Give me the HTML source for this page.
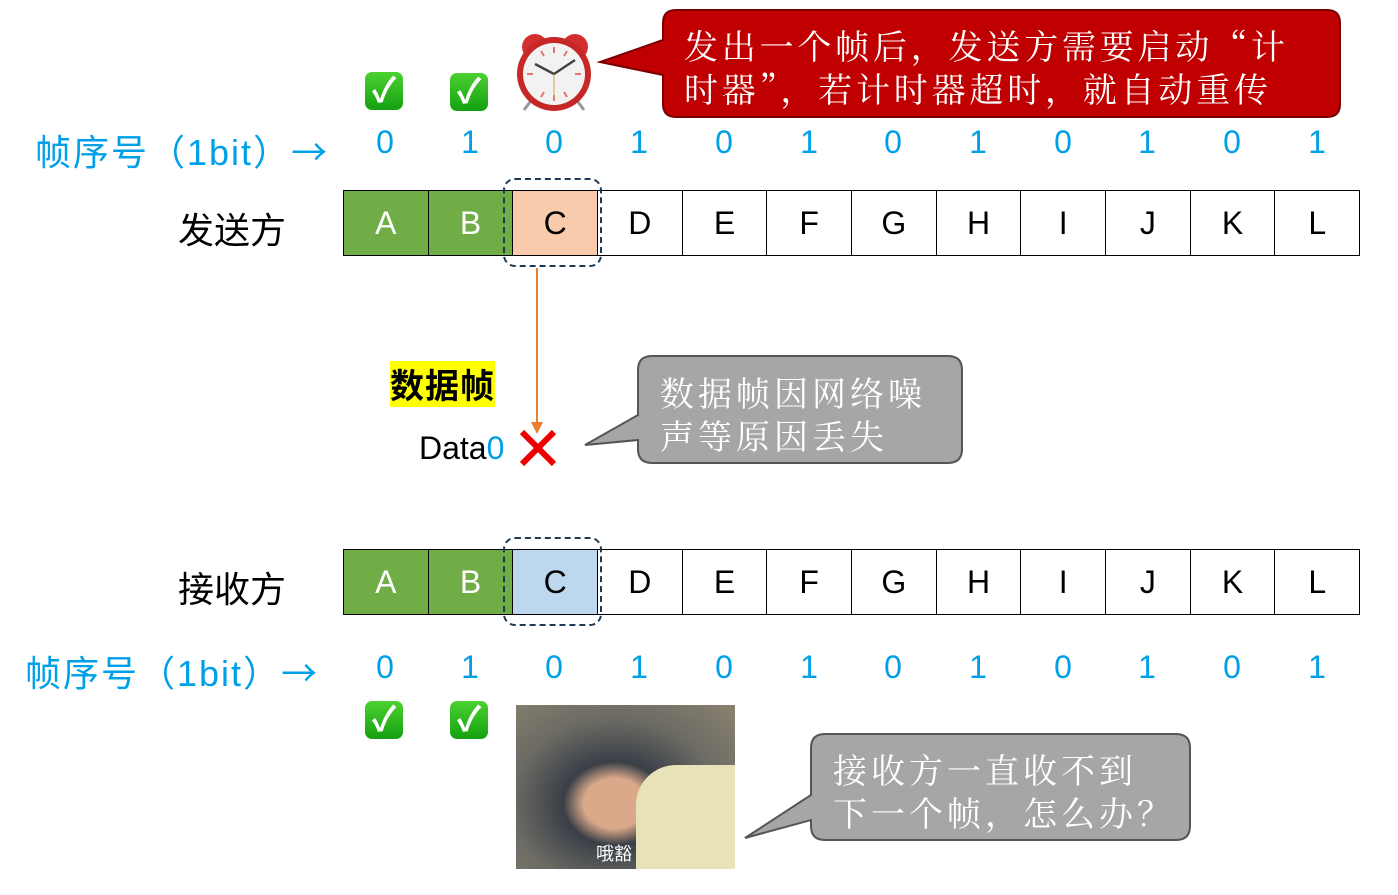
<!DOCTYPE html><html><head><meta charset="utf-8"><style>
body{margin:0;width:1398px;height:895px;position:relative;background:#fff;overflow:hidden;font-family:"Liberation Sans","Noto Sans CJK SC",sans-serif}
.a{position:absolute}
.n{position:absolute;color:#00a0e9;font-size:32px;width:60px;text-align:center;font-family:"Liberation Sans",sans-serif}
.row{position:absolute;left:343px;width:1017px;height:66px;display:flex;border:1.5px solid #000;box-sizing:border-box}
.row div{flex:1;border-right:1.5px solid #000;display:flex;align-items:center;justify-content:center;font-size:32px;color:#000}
.row div:last-child{border-right:none}
.g{background:#70ad47;color:#fff!important}
.chk{position:absolute;width:38px;height:38px;border-radius:7px;background:linear-gradient(#4cd131,#14a010);color:#fff;font-size:34px;line-height:38px;text-align:center;font-weight:bold}
.lbl{position:absolute;font-size:36px;font-family:"Noto Sans CJK SC",sans-serif}
.ct{position:absolute;font-size:34px;line-height:43px;font-family:"Noto Serif CJK SC","Noto Sans CJK SC",serif}
.dash{position:absolute;width:99px;height:89px;border:2.5px dashed #1f3a55;border-radius:12px;box-sizing:border-box}
</style></head><body>
<svg class="a" style="left:0;top:0" width="1398" height="895">
<path d="M676 10 H1327 Q1340 10 1340 23 V104 Q1340 117 1327 117 H676 Q663 117 663 104 V75 L600 62 L663 40 V23 Q663 10 676 10Z" fill="#c00000" stroke="#7a0000" stroke-width="2"/>
<path d="M652 356 H948 Q962 356 962 370 V449 Q962 463 948 463 H652 Q638 463 638 449 V440 L585 445 L638 415 V370 Q638 356 652 356Z" fill="#a6a6a6" stroke="#555" stroke-width="2"/>
<path d="M825 734 H1176 Q1190 734 1190 748 V826 Q1190 840 1176 840 H825 Q811 840 811 826 V820 L745 838 L811 795 V748 Q811 734 825 734Z" fill="#a6a6a6" stroke="#555" stroke-width="2"/>
<line x1="537" y1="268" x2="537" y2="425" stroke="#ed7d31" stroke-width="2"/>
<path d="M531 422 L537 434 L543 422Z" fill="#ed7d31"/>
<path d="M522 432 L554 464 M554 432 L522 464" stroke="#e00" stroke-width="6"/>
<circle cx="535" cy="47" r="13" fill="#d32f2f"/><circle cx="575" cy="47" r="13" fill="#d32f2f"/>
<path d="M533 98 L524 110 M575 98 L584 110" stroke="#999" stroke-width="3"/>
<circle cx="554" cy="74" r="37" fill="#c62828"/><circle cx="554" cy="74" r="31" fill="#f2f2f2"/>
<g stroke="#e57373" stroke-width="2"><path d="M554 47v6M554 95v6M527 74h6M575 74h6M541 51l3 5M567 51l-3 5M541 97l3-5M567 97l-3-5"/></g>
<path d="M554 74 L535 64 M554 74 L575 60" stroke="#444" stroke-width="2.5"/>
<line x1="554" y1="74" x2="554" y2="98" stroke="#d4a04a" stroke-width="1"/>
</svg>
<div class="lbl" style="left:35px;top:124px;color:#00a0e9;letter-spacing:2px">帧序号（<span style="font-family:'Liberation Sans'">1bit</span>）→</div>
<div class="lbl" style="left:25px;top:645px;color:#00a0e9;letter-spacing:2px">帧序号（<span style="font-family:'Liberation Sans'">1bit</span>）→</div>
<div class="lbl" style="left:178px;top:202px">发送方</div>
<div class="lbl" style="left:178px;top:561px">接收方</div>
<div class="row" style="top:190px"><div class="g">A</div><div class="g">B</div><div style="background:#f8cbad">C</div><div>D</div><div>E</div><div>F</div><div>G</div><div>H</div><div>I</div><div>J</div><div>K</div><div>L</div></div>
<div class="row" style="top:549px"><div class="g">A</div><div class="g">B</div><div style="background:#bdd7ee">C</div><div>D</div><div>E</div><div>F</div><div>G</div><div>H</div><div>I</div><div>J</div><div>K</div><div>L</div></div>
<div class="dash" style="left:503px;top:178px"></div>
<div class="dash" style="left:503px;top:537px"></div>
<div class="n" style="left:355px;top:124px">0</div><div class="n" style="left:440px;top:124px">1</div><div class="n" style="left:524px;top:124px">0</div><div class="n" style="left:609px;top:124px">1</div><div class="n" style="left:694px;top:124px">0</div><div class="n" style="left:779px;top:124px">1</div><div class="n" style="left:863px;top:124px">0</div><div class="n" style="left:948px;top:124px">1</div><div class="n" style="left:1033px;top:124px">0</div><div class="n" style="left:1117px;top:124px">1</div><div class="n" style="left:1202px;top:124px">0</div><div class="n" style="left:1287px;top:124px">1</div>
<div class="n" style="left:355px;top:649px">0</div><div class="n" style="left:440px;top:649px">1</div><div class="n" style="left:524px;top:649px">0</div><div class="n" style="left:609px;top:649px">1</div><div class="n" style="left:694px;top:649px">0</div><div class="n" style="left:779px;top:649px">1</div><div class="n" style="left:863px;top:649px">0</div><div class="n" style="left:948px;top:649px">1</div><div class="n" style="left:1033px;top:649px">0</div><div class="n" style="left:1117px;top:649px">1</div><div class="n" style="left:1202px;top:649px">0</div><div class="n" style="left:1287px;top:649px">1</div>
<div class="chk" style="left:365px;top:72px">✓</div><div class="chk" style="left:450px;top:73px">✓</div>
<div class="chk" style="left:365px;top:701px">✓</div><div class="chk" style="left:450px;top:701px">✓</div>
<div class="a" style="left:390px;top:361px;background:#ff0;font-size:34px;font-weight:bold;line-height:46px;letter-spacing:1px;font-family:'Noto Sans CJK SC',sans-serif">数据帧</div>
<div class="a" style="left:419px;top:430px;font-size:32px">Data<span style="color:#00a0e9">0</span></div>
<div class="ct" style="left:684px;top:23px;color:#fff;letter-spacing:3.8px">发出一个帧后，发送方需要启动“计<br>时器”，若计时器超时，就自动重传</div>
<div class="ct" style="left:660px;top:370px;color:#fff;letter-spacing:4px">数据帧因网络噪<br>声等原因丢失</div>
<div class="ct" style="left:833px;top:747px;color:#fff;letter-spacing:4px">接收方一直收不到<br>下一个帧，怎么办？</div>
<div class="a" style="left:516px;top:705px;width:219px;height:164px;background:radial-gradient(ellipse at 45% 60%,#d9a98a 0 18%,#3a3f48 30%,#6b6a63 60%,#8a8270 100%)">
<div class="a" style="left:120px;top:60px;width:99px;height:104px;background:#e8e2b8;border-radius:40px 0 0 0"></div>
<div class="a" style="left:80px;top:135px;color:#fff;font-size:18px;font-family:'Noto Sans CJK SC',sans-serif">哦豁</div></div>
</body></html>
